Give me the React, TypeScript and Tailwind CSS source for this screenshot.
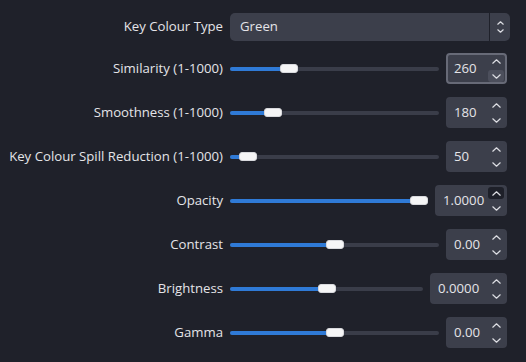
import React from "react";

const FONT = { fontFamily: '"Open Sans", "Noto Sans", sans-serif' };

function Chevron({ up, w = 9, h = 5 }: { up: boolean; w?: number; h?: number }) {
  return (
    <svg width={w} height={h} viewBox={`0 0 ${w} ${h}`} fill="none">
      <path
        d={up ? `M0.8 ${h - 0.8} L${w / 2} 0.8 L${w - 0.8} ${h - 0.8}` : `M0.8 0.8 L${w / 2} ${h - 0.8} L${w - 0.8} 0.8`}
        stroke="#dcdde2"
        strokeWidth="1.2"
        strokeLinecap="round"
        strokeLinejoin="round"
      />
    </svg>
  );
}

type Row = {
  label: string;
  value: string;
  frac: number;
  boxW: string;
  focused?: boolean;
  upState?: "pressed";
  downState?: "hover";
};

const rows: Row[] = [
  { label: "Similarity (1-1000)", value: "260", frac: 259 / 999, boxW: "w-[61px]", focused: true, downState: "hover" },
  { label: "Smoothness (1-1000)", value: "180", frac: 179 / 999, boxW: "w-[61px]" },
  { label: "Key Colour Spill Reduction (1-1000)", value: "50", frac: 49 / 999, boxW: "w-[61px]" },
  { label: "Opacity", value: "1.0000", frac: 1, boxW: "w-[72px]", upState: "pressed" },
  { label: "Contrast", value: "0.00", frac: 0.5, boxW: "w-[61px]" },
  { label: "Brightness", value: "0.0000", frac: 0.5, boxW: "w-[77px]" },
  { label: "Gamma", value: "0.00", frac: 0.5, boxW: "w-[61px]" },
];

function Slider({ frac }: { frac: number }) {
  const handleLeft = `calc(${frac} * (100% - 18px))`;
  const fillWidth = `calc(${frac} * (100% - 18px) + 9px)`;
  return (
    <div className="relative flex-1 h-[10px] flex items-center">
      <div className="w-full h-[4px] rounded-full bg-[#3a3d49]" />
      <div className="absolute left-0 h-[4px] rounded-full bg-[#2f7ad6]" style={{ width: fillWidth }} />
      <div
        className="absolute top-[0.5px] w-[18px] h-[9px] rounded-[3px] bg-[#f5f5f6] border border-[#d8d9dd]"
        style={{ left: handleLeft }}
      />
    </div>
  );
}

function SpinBox({ row }: { row: Row }) {
  return (
    <div
      className={`${row.boxW} mr-[3px] h-[31px] rounded-[4px] bg-[#3c3f4b] border-2 ${
        row.focused ? "border-[#676a77]" : "border-[#3c3f4b]"
      } flex items-stretch`}
    >
      <div className="flex-1 flex items-center pl-[6px] text-[13.2px] text-[#e4e4e8] leading-none">{row.value}</div>
      <div className="w-[16px] mr-[1px] flex flex-col">
        <div
          className={`mt-0 h-[12px] rounded-[3px] flex items-center justify-center ${
            row.upState === "pressed" ? "bg-[#1e2029]" : ""
          }`}
        >
          <Chevron up />
        </div>
        <div
          className={`mt-[3px] h-[12px] rounded-[3px] flex items-center justify-center ${
            row.downState === "hover" ? "bg-[#4c4f5c]" : ""
          }`}
        >
          <Chevron up={false} />
        </div>
      </div>
    </div>
  );
}

export default function App() {
  return (
    <div className="w-[526px] h-[362px] bg-[#1f212a] flex flex-col pt-[13px] text-[13.2px] text-[#e4e4e8]" style={FONT}>
      <div className="flex items-center h-[28px]">
        <div className="w-[223px] text-right whitespace-nowrap">Key Colour Type</div>
        <div className="ml-[7px] w-[280px] h-[28px] flex gap-[1px]">
          <div className="flex-1 rounded-l-[5px] bg-[#3c3f4b] flex items-center pl-[10px]">Green</div>
          <div className="w-[20px] rounded-r-[5px] bg-[#3c3f4b] flex flex-col items-center justify-center gap-[4px]">
            <Chevron up w={7} h={4} />
            <Chevron up={false} w={7} h={4} />
          </div>
        </div>
      </div>
      {rows.map((row, i) => (
        <div key={row.label} className={`flex items-center h-[31px] ${i === 0 ? "mt-[12px]" : "mt-[13px]"}`}>
          <div className="w-[223px] text-right whitespace-nowrap">{row.label}</div>
          <div className="ml-[7px] w-[280px] flex items-center gap-[7px]">
            <Slider frac={row.frac} />
            <SpinBox row={row} />
          </div>
        </div>
      ))}
    </div>
  );
}
